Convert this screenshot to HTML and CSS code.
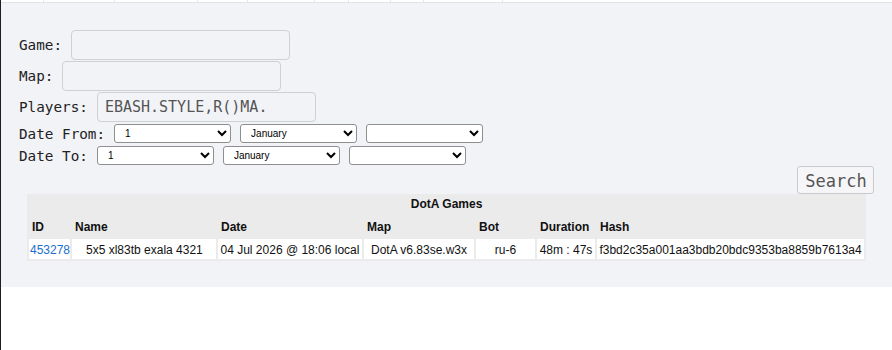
FILE: index.html
```html
<!DOCTYPE html>
<html>
<head>
<meta charset="utf-8">
<link rel="stylesheet" href="styles.css">
</head>
<body>
<div class="strip">
  <span style="width:43px"></span><span style="width:71px"></span><span style="width:83px"></span><span style="width:50px"></span><span style="width:67px"></span><span style="width:34px"></span><span style="width:42px"></span><span style="width:33px"></span><span style="width:79px"></span>
</div>
<div class="panel">
  <form class="search-form">
    <div class="row row-text"><label>Game:</label><input class="field" type="text"></div>
    <div class="row row-text"><label>Map:</label><input class="field" type="text"></div>
    <div class="row row-text"><label>Players:</label><input class="field" type="text" value="EBASH.STYLE,R()MA."></div>
    <div class="row row-date first"><label>Date From:</label>
      <select class="sel"><option>1</option></select>
      <select class="sel"><option>January</option></select>
      <select class="sel"><option></option></select>
    </div>
    <div class="row row-date"><label>Date To:</label>
      <select class="sel"><option>1</option></select>
      <select class="sel"><option>January</option></select>
      <select class="sel"><option></option></select>
    </div>
    <div class="btn-row"><button type="button" class="btn">Search</button></div>
  </form>
  <table class="games">
    <colgroup>
      <col class="c-id"><col class="c-name"><col class="c-date"><col class="c-map"><col class="c-bot"><col class="c-dur"><col class="c-hash">
    </colgroup>
    <thead>
      <tr><th colspan="7" class="title">DotA Games</th></tr>
      <tr class="head"><th>ID</th><th>Name</th><th>Date</th><th>Map</th><th>Bot</th><th>Duration</th><th>Hash</th></tr>
    </thead>
    <tbody>
      <tr class="data">
        <td class="id"><a href="#">453278</a></td>
        <td class="name">5x5 xl83tb exala 4321</td>
        <td>04 Jul 2026 @ 18:06 local</td>
        <td>DotA v6.83se.w3x</td>
        <td>ru-6</td>
        <td>48m : 47s</td>
        <td>f3bd2c35a001aa3bdb20bdc9353ba8859b7613a4</td>
      </tr>
    </tbody>
  </table>
</div>
</body>
</html>
```
FILE: styles.css
```css
html, body {
  margin: 0;
  padding: 0;
  background: #ffffff;
}
body {
  border-left: 1px solid #1e1e1e;
  min-height: 350px;
  box-sizing: border-box;
}
.strip {
  display: flex;
  height: 2px;
  border-bottom: 1px solid #e1e2e5;
}
.strip span {
  display: block;
  box-sizing: border-box;
  border-right: 1px solid #e6e6e6;
  height: 2px;
}
.panel {
  background: #f2f3f7;
  padding: 27px 18px 26px 18px;
}
.search-form {
  margin: 0;
  font-family: "DejaVu Sans Mono", monospace;
  font-size: 14.3px;
  color: #222;
}
.row {
  display: flex;
  align-items: center;
}
.row label {
  line-height: 16px;
}
.row-text {
  height: 30px;
  margin-bottom: 1px;
}
.field {
  box-sizing: border-box;
  width: 219px;
  height: 30px;
  margin: 0 0 0 9px;
  padding: 0 0 0 7px;
  border: 1px solid #cfd0d3;
  border-radius: 4px;
  background: transparent;
  font-family: "DejaVu Sans Mono", monospace;
  font-size: 15px;
  color: #555;
  outline: none;
}
.row-date {
  height: 19px;
  margin-top: 3px;
}
.row-date.first {
  margin-top: 2px;
}
.sel {
  box-sizing: border-box;
  width: 117px;
  height: 19px;
  margin: 0 0 0 9px;
  font-family: "Liberation Sans", Arial, sans-serif;
  font-size: 10px;
  color: #000;
  background: #fff;
  border: 1px solid #8f8f8f;
  border-radius: 3px;
  padding: 0 0 0 6px;
}
.btn-row {
  display: flex;
  justify-content: flex-end;
  margin-top: 1px;
}
.btn {
  box-sizing: border-box;
  width: 77px;
  height: 28px;
  padding: 0 0 0 1px;
  border: 1px solid #c9cacd;
  border-radius: 3px;
  background: #f6f6f8;
  font-family: "DejaVu Sans Mono", monospace;
  font-size: 17px;
  line-height: 28px;
  color: #555;
}
.games {
  margin: 0 8px;
  width: 839px;
  table-layout: fixed;
  border-collapse: separate;
  border-spacing: 2px;
  background: #ebebeb;
  font-family: "Liberation Sans", Arial, sans-serif;
  font-size: 12px;
  color: #111;
}
.c-id { width: 41px; }
.c-name { width: 144px; }
.c-date { width: 144px; }
.c-map { width: 110px; }
.c-bot { width: 59px; }
.c-dur { width: 58px; }
.c-hash { width: 267px; }
.games th {
  font-weight: bold;
  text-align: left;
  padding: 0 3px;
  line-height: 14px;
}
.games th.title {
  text-align: center;
  height: 15px;
  padding: 0 0 3px 0;
}
.games tr.head th {
  height: 20px;
  padding-top: 1px;
}
.games td {
  background: #fff;
  height: 19px;
  line-height: 14px;
  padding: 1px 0 0 0;
  text-align: center;
  white-space: nowrap;
  overflow: hidden;
}
.games td.id {
  text-align: left;
  padding-left: 1px;
}
.games td.id a {
  color: #1a6fd1;
  text-decoration: none;
}
.games td.name {
  text-align: left;
  padding-left: 14px;
}
```
